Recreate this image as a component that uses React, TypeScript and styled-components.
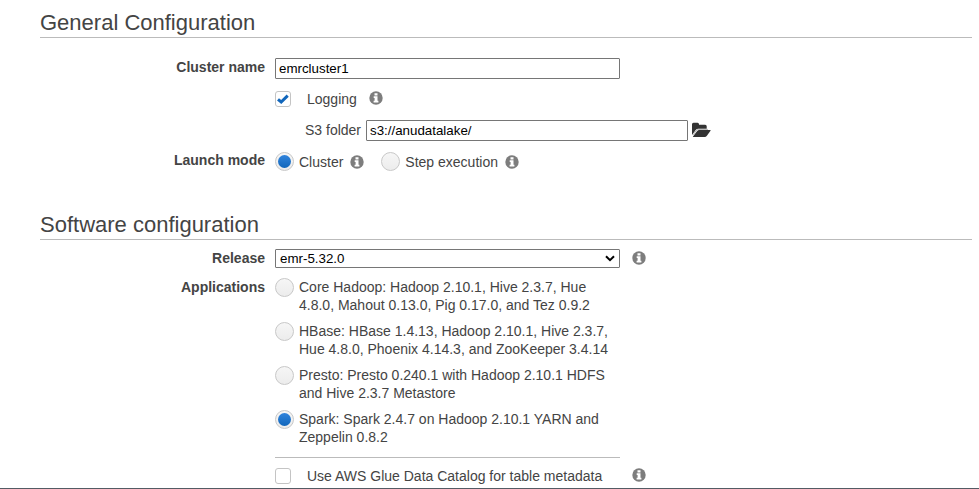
import React from "react";
import styled, { createGlobalStyle, css } from "styled-components";

const GlobalStyle = createGlobalStyle`
  *, *::before, *::after { box-sizing: border-box; }
  html, body { margin: 0; padding: 0; }
  body {
    background: #fff;
    color: #444;
    font: 14px/18px "Liberation Sans", Arial, sans-serif;
    overflow: hidden;
  }
`;

const Page = styled.main`
  display: flex;
  flex-direction: column;
  height: 489px;
  padding: 0 7px 0 40px;
  border-bottom: 1px solid #545b64;
`;

const Heading = styled.h2<{ $top: number; $gap: number }>`
  flex: none;
  margin: ${(p) => p.$top}px 0 ${(p) => p.$gap}px;
  height: 28px;
  padding-bottom: 2px;
  border-bottom: 1px solid #bbb;
  font-size: 22px;
  font-weight: 400;
  line-height: 25px;
`;

const Row = styled.div<{ $height?: number }>`
  display: grid;
  grid-template-columns: 225px 345px auto;
  column-gap: 10px;
  flex: none;
  ${(p) => p.$height && css`height: ${p.$height}px;`}
`;

const Label = styled.span`
  text-align: right;
  font-weight: 700;
`;

const Field = styled.div<{ $shift?: number; $height?: number }>`
  grid-column: 2;
  display: flex;
  align-items: center;
  height: ${(p) => p.$height ?? 21}px;
  white-space: nowrap;
  margin-top: ${(p) => p.$shift ?? 0}px;
`;

const TextInput = styled.input<{ $width: number }>`
  flex: none;
  width: ${(p) => p.$width}px;
  height: 21px;
  margin: 0;
  padding: 1px 3px;
  border: 1px solid #767676;
  border-radius: 1px;
  background: #fff;
  color: #000;
  font: 13.333px "Liberation Sans", Arial, sans-serif;
  outline: none;
`;

const SelectBox = styled.div`
  display: flex;
  align-items: center;
  justify-content: space-between;
  width: 345px;
  height: 19px;
  padding: 0 4px;
  border: 1px solid #767676;
  border-radius: 1px;
  color: #000;
  font-size: 13.333px;
  line-height: 17px;
`;

const Check = styled.span`
  display: flex;
  align-items: center;
  justify-content: center;
  flex: none;
  width: 16px;
  height: 16px;
  margin-right: 16px;
  border: 1px solid #c4c4c4;
  border-radius: 3px;
  background: #fff;
`;

const Radio = styled.span<{ $on?: boolean; $left?: number }>`
  display: flex;
  align-items: center;
  justify-content: center;
  flex: none;
  width: 19px;
  height: 19px;
  margin: 0 5px 0 ${(p) => p.$left ?? 0}px;
  border: 1px solid #c8c8c8;
  border-radius: 50%;
  background: linear-gradient(#f6f6f6, #ececec);
  ${(p) =>
    p.$on &&
    css`
      &::after {
        content: "";
        width: 13px;
        height: 13px;
        border-radius: 50%;
        background: linear-gradient(#3184dc, #1166bb);
      }
    `}
`;

const InfoSvg = styled.svg<{ $left: number; $top: number }>`
  display: block;
  flex: none;
  width: 14px;
  height: 14px;
  margin: ${(p) => p.$top}px 0 0 ${(p) => p.$left}px;
`;

const FolderSvg = styled.svg`
  display: block;
  flex: none;
  margin: 0 0 2px 3px;
`;

const Indent = styled.span`
  flex: none;
  width: 91px;
  padding: 0 0 1px 30px;
`;

const Options = styled.div`
  display: flex;
  flex-direction: column;
  gap: 8px;
  height: 180px;
  border-bottom: 1px solid #bbb;
`;

const Option = styled.div`
  display: flex;
  align-items: flex-start;
  height: 36px;
  white-space: nowrap;
`;

const Info = ({ left = 0, top = 0 }: { left?: number; top?: number }) => (
  <InfoSvg $left={left} $top={top} viewBox="0 0 14 14">
    <circle cx="7" cy="7" r="6.7" fill="#7d7d7d" />
    <path d="M5.5 2.3h3v2.2h-3zM4.7 5.3h3.8v4.5h.9v1.6H4.6V9.8h1V6.9h-.9z" fill="#fff" />
  </InfoSvg>
);

const Folder = () => (
  <FolderSvg width="20" height="16" viewBox="0 0 20 16">
    <path d="M1 13V2.2Q1 .7 2.5 .7H6.6Q8 .7 8 2.2V2.8H14.2Q15.7 2.8 15.7 4.3V6.7H7.3Q5.8 6.7 4.7 8Z" fill="#333" />
    <path d="M1.8 14.8L6 9.2Q6.9 8 8.3 8H19.2Q20 8 19.5 8.8L15.9 13.7Q15 14.9 13.6 14.9H2.3Z" fill="#333" />
    <path d="M2.2 12.8L5.2 8.7Q6.2 7.4 7.7 7.4H17" fill="none" stroke="#aaa" strokeWidth=".9" />
  </FolderSvg>
);

const applications = [
  { lines: ["Core Hadoop: Hadoop 2.10.1, Hive 2.3.7, Hue", "4.8.0, Mahout 0.13.0, Pig 0.17.0, and Tez 0.9.2"] },
  { lines: ["HBase: HBase 1.4.13, Hadoop 2.10.1, Hive 2.3.7,", "Hue 4.8.0, Phoenix 4.14.3, and ZooKeeper 3.4.14"] },
  { lines: ["Presto: Presto 0.240.1 with Hadoop 2.10.1 HDFS", "and Hive 2.3.7 Metastore"] },
  { lines: ["Spark: Spark 2.4.7 on Hadoop 2.10.1 YARN and", "Zeppelin 0.8.2"], selected: true },
];

export default function App() {
  return (
    <>
      <GlobalStyle />
      <Page>
        <Heading $top={10} $gap={20}>General Configuration</Heading>
        <Row $height={31}>
          <Label>Cluster name</Label>
          <TextInput $width={345} defaultValue="emrcluster1" />
        </Row>
        <Row $height={31}>
          <Field $height={20}>
            <Check>
              <svg width="14" height="14" viewBox="0 0 14 14">
                <path d="M2 7.3L5.2 10L11.7 3.6" fill="none" stroke="#1166bb" strokeWidth="3" />
              </svg>
            </Check>
            <span>Logging</span>
            <Info left={12} top={-2} />
          </Field>
        </Row>
        <Row $height={31}>
          <Field>
            <Indent>S3 folder</Indent>
            <TextInput $width={322} defaultValue="s3://anudatalake/" />
            <Folder />
          </Field>
        </Row>
        <Row $height={31}>
          <Label>Launch mode</Label>
          <Field>
            <Radio $on />
            <span>Cluster</span>
            <Info left={7} />
            <Radio $left={17} />
            <span>Step execution</span>
            <Info left={7} />
          </Field>
        </Row>
        <Heading $top={30} $gap={9}>Software configuration</Heading>
        <Row $height={29}>
          <Label>Release</Label>
          <SelectBox>
            <span>emr-5.32.0</span>
            <svg width="10" height="7" viewBox="0 0 10 7">
              <path d="M1 1.2L5 5.2L9 1.2" fill="none" stroke="#000" strokeWidth="2" />
            </svg>
          </SelectBox>
          <Info left={2} top={2} />
        </Row>
        <Row $height={190}>
          <Label>Applications</Label>
          <Options>
            {applications.map((app) => (
              <Option key={app.lines[0]}>
                <Radio $on={app.selected} />
                <span>
                  {app.lines[0]}
                  <br />
                  {app.lines[1]}
                </span>
              </Option>
            ))}
          </Options>
        </Row>
        <Row>
          <Field $shift={-2} $height={20}>
            <Check />
            <span>Use AWS Glue Data Catalog for table metadata</span>
          </Field>
          <Info left={2} />
        </Row>
      </Page>
    </>
  );
}
